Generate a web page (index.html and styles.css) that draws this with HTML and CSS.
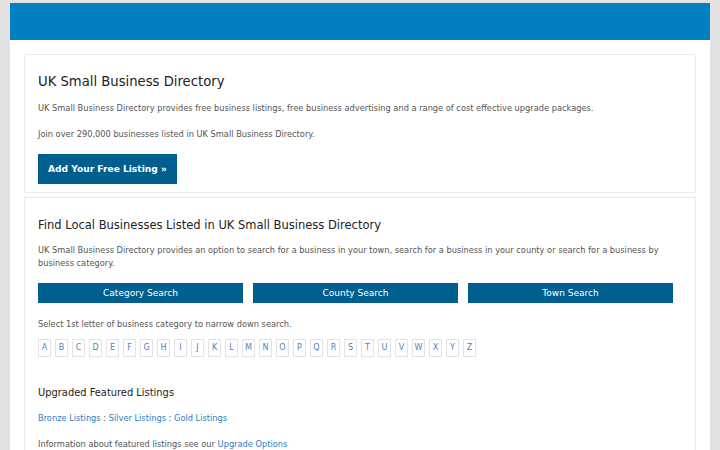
FILE: index.html
```html
<!DOCTYPE html>
<html lang="en">
<head>
  <meta charset="UTF-8">
  <title>UK Small Business Directory</title>
  <link rel="stylesheet" href="styles.css">
</head>
<body>
  <div class="page">
    <header class="topbar"></header>

    <main class="content">
      <section class="card">
        <h1>UK Small Business Directory</h1>
        <p>UK Small Business Directory provides free business listings, free business advertising and a range of cost effective upgrade packages.</p>
        <p>Join over 290,000 businesses listed in UK Small Business Directory.</p>
        <a class="add-btn" href="#">Add Your Free Listing &raquo;</a>
      </section>

      <section class="card">
        <h2>Find Local Businesses Listed in UK Small Business Directory</h2>
        <p>UK Small Business Directory provides an option to search for a business in your town, search for a business in your county or search for a business by business category.</p>
        <div class="search-row">
          <a class="search-btn" href="#">Category Search</a>
          <a class="search-btn" href="#">County Search</a>
          <a class="search-btn" href="#">Town Search</a>
        </div>
        <p class="hint">Select 1st letter of business category to narrow down search.</p>
        <div class="letters">
          <a href="#">A</a><a href="#">B</a><a href="#">C</a><a href="#">D</a><a href="#">E</a><a href="#">F</a><a href="#">G</a><a href="#">H</a><a href="#">I</a><a href="#">J</a><a href="#">K</a><a href="#">L</a><a href="#">M</a><a href="#">N</a><a href="#">O</a><a href="#">P</a><a href="#">Q</a><a href="#">R</a><a href="#">S</a><a href="#">T</a><a href="#">U</a><a href="#">V</a><a href="#">W</a><a href="#">X</a><a href="#">Y</a><a href="#">Z</a>
        </div>

        <h3>Upgraded Featured Listings</h3>
        <p><a href="#">Bronze Listings</a> : <a href="#">Silver Listings</a> : <a href="#">Gold Listings</a></p>
        <p class="last">Information about featured listings see our <a href="#">Upgrade Options</a></p>
      </section>
    </main>
  </div>
</body>
</html>
```

FILE: styles.css
```css
* { margin: 0; padding: 0; box-sizing: border-box; }
body { font-family: "DejaVu Sans", sans-serif; background: #e1e1e1; color: #555; padding-top: 3px; }
a { color: #2a7dc4; text-decoration: none; }

.page { width: 700px; margin: 0 auto; background: #fff; min-height: 460px; }
.topbar { height: 37px; background: #007fc1; }

.content { padding: 14px 14px 0; }
.card { border: 1px solid #ebebeb; padding: 14px 13px 8px; margin-bottom: 4px; }

.card h1 { font-size: 13.2px; font-weight: normal; color: #222; line-height: 26px; margin-bottom: 7px; }
.card h2 { font-size: 11.5px; font-weight: normal; color: #222; line-height: 26px; margin-bottom: 6px; }
.card h3 { font-size: 9.9px; font-weight: normal; color: #222; line-height: 20px; margin: 26px 0 9px; }
.card p { font-size: 8.25px; line-height: 13px; margin-bottom: 13px; }
.card p.last { margin-bottom: 0; }

.add-btn { display: inline-block; background: #005f8e; color: #fff; font-weight: bold; font-size: 9.1px; line-height: 30px; padding: 0 10px; }

.search-row { display: grid; grid-template-columns: repeat(3, 205px); gap: 10px; margin: 8px 0 15px; }
.search-btn { display: block; background: #005f8e; color: #fff; text-align: center; font-size: 9px; line-height: 20px; }

.card p.hint { margin-bottom: 8px; }
.letters { display: flex; gap: 4px; }
.letters a { display: block; width: 13px; height: 18px; border: 1px solid #e3e3e3; font-size: 8px; line-height: 16px; text-align: center; color: #3d85c6; }
```
